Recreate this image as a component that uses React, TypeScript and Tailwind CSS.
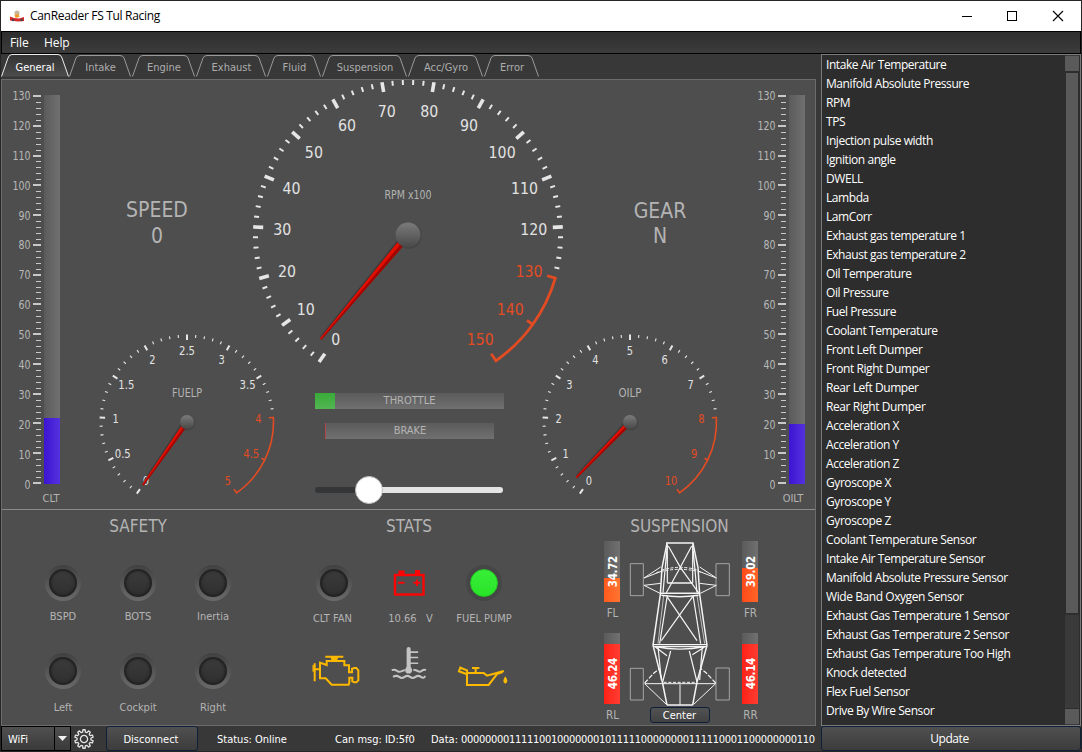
import type { ReactNode } from "react";

const tabs = [
  { name: "General", width: 68 },
  { name: "Intake", width: 62 },
  { name: "Engine", width: 63 },
  { name: "Exhaust", width: 70 },
  { name: "Fluid", width: 54 },
  { name: "Suspension", width: 85 },
  { name: "Acc/Gyro", width: 75 },
  { name: "Error", width: 55 },
];

const signals = [
  "Intake Air Temperature",
  "Manifold Absolute Pressure",
  "RPM",
  "TPS",
  "Injection pulse width",
  "Ignition angle",
  "DWELL",
  "Lambda",
  "LamCorr",
  "Exhaust gas temperature 1",
  "Exhaust gas temperature 2",
  "Oil Temperature",
  "Oil Pressure",
  "Fuel Pressure",
  "Coolant Temperature",
  "Front Left Dumper",
  "Front Right Dumper",
  "Rear Left Dumper",
  "Rear Right Dumper",
  "Acceleration X",
  "Acceleration Y",
  "Acceleration Z",
  "Gyroscope X",
  "Gyroscope Y",
  "Gyroscope Z",
  "Coolant Temperature Sensor",
  "Intake Air Temperature Sensor",
  "Manifold Absolute Pressure Sensor",
  "Wide Band Oxygen Sensor",
  "Exhaust Gas Temperature 1 Sensor",
  "Exhaust Gas Temperature 2 Sensor",
  "Exhaust Gas Temperature Too High",
  "Knock detected",
  "Flex Fuel Sensor",
  "Drive By Wire Sensor",
];

const canData = "00000000111110010000000101111100000000111110001100000000110";

const DIGIT = 0.546;
const DOT = 0.303;
const labelWidth = (text: string, size: number) =>
  [...text].reduce((sum, ch) => sum + (ch === "." ? DOT : DIGIT), 0) * size;

/* Point on a dial; 0 degrees is straight down and angles grow clockwise. */
const polar = (r: number, deg: number): [number, number] => {
  const a = (deg * Math.PI) / 180;
  return [-Math.sin(a) * r, Math.cos(a) * r];
};

type GaugeProps = {
  size: number;
  max: number;
  step: number;
  redFrom: number;
  title: string;
  titleY: number;
  titleWidth: number;
  radius: number;
  majorLength: number;
  minorLength: number;
  majorWidth: number;
  minorWidth: number;
  labelRadius: number;
  fontSize: number;
  hub: number;
  needleLength: number;
  needleAngle: number;
  needleWidth: number;
  arcRadius: number;
  arcWidth: number;
};

function Gauge(g: GaugeProps) {
  const angle = (v: number) => 35 + (v / g.max) * 290;
  const count = Math.round(g.max / g.step) * 5;
  const redDeg = angle(g.redFrom);
  const [ax, ay] = polar(g.arcRadius, redDeg);
  const [bx, by] = polar(g.arcRadius, 325);
  const half = g.size / 2;
  return (
    <svg
      width={g.size}
      height={g.size}
      viewBox={`${-half} ${-half} ${g.size} ${g.size}`}
      className="block shrink-0 overflow-visible"
    >
      {Array.from({ length: count + 1 }, (_, i) => {
        const value = (i * g.step) / 5;
        const major = i % 5 === 0;
        const red = value >= g.redFrom;
        if (red && !major) return null;
        const edge = red && value > g.redFrom && value < g.max;
        const outer = red ? g.arcRadius : g.radius;
        const inner = g.radius - g.majorLength * (edge ? 0.85 : 1);
        const [x1, y1] = polar(major ? inner : g.radius - g.minorLength, angle(value));
        const [x2, y2] = polar(outer, angle(value));
        return (
          <line
            key={i}
            x1={x1}
            y1={y1}
            x2={x2}
            y2={y2}
            stroke={red ? "#e34c22" : "#e6e6e6"}
            strokeWidth={red ? g.arcWidth : major ? g.majorWidth : g.minorWidth}
          />
        );
      })}
      <path
        d={`M${ax} ${ay}A${g.arcRadius} ${g.arcRadius} 0 0 1 ${bx} ${by}`}
        fill="none"
        stroke="#e34c22"
        strokeWidth={g.arcWidth}
        strokeLinecap="square"
      />
      {Array.from({ length: count / 5 + 1 }, (_, i) => {
        const value = i * g.step;
        const text = String(value);
        const [x, y] = polar(g.labelRadius, angle(value));
        return (
          <text
            key={i}
            x={x}
            y={y + g.fontSize * 0.37 + 0.5}
            textAnchor="middle"
            fontSize={g.fontSize}
            textLength={labelWidth(text, g.fontSize)}
            lengthAdjust="spacingAndGlyphs"
            fill={value >= g.redFrom ? "#e34c22" : "#e2e2e2"}
          >
            {text}
          </text>
        );
      })}
      <text
        x={0}
        y={g.titleY + 4.3}
        textAnchor="middle"
        fontSize={11.5}
        textLength={g.titleWidth}
        lengthAdjust="spacingAndGlyphs"
        fill="#b4b4b4"
      >
        {g.title}
      </text>
      <g transform={`rotate(${g.needleAngle})`}>
        <polygon
          points={`${-g.needleWidth - 1.5},0 ${g.needleWidth},0 0.8,${g.needleLength} -2,${g.needleLength - 2}`}
          fill="#2c2c2c"
          opacity="0.55"
        />
        <polygon
          points={`${-g.needleWidth},0 ${g.needleWidth},0 0.9,${g.needleLength} -0.9,${g.needleLength}`}
          fill="#e40e00"
        />
        <polygon
          points={`${g.needleWidth},0 ${g.needleWidth * 0.1},0 0,${g.needleLength} 0.9,${g.needleLength}`}
          fill="#a00500"
        />
      </g>
      <defs>
        <linearGradient id={`hub-${g.title.slice(0, 3)}`} x1="0" y1="0" x2="0" y2="1">
          <stop offset="0" stopColor="#7b7b7b" />
          <stop offset="1" stopColor="#484848" />
        </linearGradient>
      </defs>
      <circle cx="0.6" cy="0.8" r={g.hub + 0.6} fill="#3c3c3c" opacity="0.5" />
      <circle r={g.hub} fill={`url(#hub-${g.title.slice(0, 3)})`} />
    </svg>
  );
}

const smallGauge = {
  size: 176,
  titleY: -29.5,
  radius: 87.5,
  majorLength: 5.5,
  minorLength: 3,
  majorWidth: 2,
  minorWidth: 1.1,
  labelRadius: 71.5,
  fontSize: 11.5,
  hub: 7,
  needleLength: 77,
  needleWidth: 2.4,
  arcRadius: 86.5,
  arcWidth: 1.6,
};

function Thermometer({ name, level, caption }: { name: string; level: number; caption: string }) {
  return (
    <div className="flex w-[62px] shrink-0 flex-col pt-[15px]">
      <svg width="62" height="390" viewBox="0 0 62 390" className="block shrink-0 overflow-visible">
        <defs>
          <linearGradient id="tube" x1="0" x2="1" y1="0" y2="0">
            <stop offset="0" stopColor="#5b5b5b" />
            <stop offset="1" stopColor="#707070" />
          </linearGradient>
          <linearGradient id="fluid" x1="0" x2="1" y1="0" y2="0">
            <stop offset="0" stopColor="#3c14d2" />
            <stop offset="1" stopColor="#5432de" />
          </linearGradient>
        </defs>
        <rect x="42" y="0" width="16" height="389" fill="url(#tube)" />
        <rect x="42" y={389 - level} width="16" height={level} fill="url(#fluid)" />
        {Array.from({ length: 66 }, (_, i) => {
          const major = i % 5 === 0;
          const y = Math.round(388 - i * 5.954);
          return (
            <rect
              key={i}
              x={major ? 31 : 34}
              y={major ? y - 1 : y}
              width={major ? 8 : 5}
              height={major ? 2 : 1}
              fill="#c8c8c8"
            />
          );
        })}
        {Array.from({ length: 14 }, (_, i) => (
          <text
            key={i}
            x="28.5"
            y={393.5 - i * 29.88}
            textAnchor="end"
            fontSize="11.5"
            textLength={labelWidth(String(i * 10), 11)}
            lengthAdjust="spacingAndGlyphs"
            fill="#b8b8b8"
          >
            {i * 10}
          </text>
        ))}
      </svg>
      <div
        className={`flex h-[26px] w-[40px] shrink-0 items-center justify-center text-[11px] leading-none text-[#b4b4b4] ${caption}`}
      >
        {name}
      </div>
    </div>
  );
}

function Led({ on }: { on?: boolean }) {
  return (
    <div
      className={
        on
          ? "flex size-9 items-center justify-center rounded-full bg-[#464646]"
          : "flex size-9 items-center justify-center rounded-full bg-linear-to-b from-[#414141] to-[#6a6a6a]"
      }
    >
      <div
        className={
          on
            ? "size-7 rounded-full border border-[#22c822] bg-linear-to-b from-[#38ee38] to-[#28e428]"
            : "size-7 rounded-full border-2 border-[#232323] bg-linear-to-b from-[#3b3b3b] to-[#303030] shadow-[inset_0_0_3px_#242424]"
        }
      />
    </div>
  );
}

function Lamp({ label, height, children }: { label: ReactNode; height: string; children: ReactNode }) {
  return (
    <div className={`flex w-[75px] flex-col items-center ${height}`}>
      {children}
      <div className="flex grow items-center text-[11px] leading-none whitespace-pre text-[#b4b4b4]">{label}</div>
    </div>
  );
}

function Battery() {
  return (
    <svg width="36" height="36" viewBox="0 0 36 36">
      <path d="M7.500 5.500h6v4.500h-6zM24 5h5v5h-5z" fill="#fb0404" />
      <rect x="4" y="10" width="28.500" height="19.500" fill="none" stroke="#fb0404" strokeWidth="2.400" />
      <path d="M7 17.700h6.500M22.500 17.700h6.500M26 14.500v6.500" stroke="#fb0404" strokeWidth="1.900" />
    </svg>
  );
}

function EngineIcon() {
  return (
    <svg width="50" height="36" viewBox="152 448 150 108">
      <g fill="none" stroke="#fdb900" strokeWidth="6">
        <path d="M195 456h54M199 481v-12h53v13h14v21h9v-11l7-2h6l6 7v30l-6 6h-6l-6-3v-11h-9v14l-2 7h-51l-18-19h-17v-47z" />
        <path d="M163 476v54M163 494h13" strokeWidth="6" />
        <path d="M158.500 481v20" strokeWidth="4" />
      </g>
      <path d="M210 456h24l-4 13h-16z" fill="#fdb900" />
    </svg>
  );
}

function CoolantIcon() {
  return (
    <svg width="36" height="36" viewBox="394 420 106 106">
      <g fill="none" stroke="#c4c4c4" strokeWidth="6">
        <path d="M446 432v60" strokeWidth="12" strokeLinecap="round" />
        <path d="M450 441h24M450 457h24M450 474h24" strokeWidth="4.500" />
        <path d="M396 494q9-3 15 2t15 1t10-3M460 494q7-1 13 3t12-1t12-2" />
        <path d="M400 514q10-6 18 0t16 0t16 0t16 0t16 0t13-3" />
      </g>
      <circle cx="446" cy="494" r="10" fill="#c4c4c4" />
    </svg>
  );
}

function OilIcon() {
  return (
    <svg width="52" height="24" viewBox="590 480 156 72">
      <g fill="none" stroke="#fdb900" strokeWidth="6.200">
        <path d="M620 504h50l10 8 50-14-7 5-12 3-26 34h-65z" />
        <path d="M620 508l-24-9 4-11 20 8v10M635 489h22M646 489v14" />
      </g>
      <path d="M735 514q12 17 0 22q-12-5 0-22z" fill="#fdb900" />
    </svg>
  );
}

function Chassis() {
  return (
    <svg width="102" height="166" viewBox="118 95 306 498" className="block">
      <g fill="none" stroke="#a4a4a4" strokeWidth="3">
        <path d="M122 163h39v96h-39zM379 163h40v96h-40zM122 477h39v95h-39zM379 476h40v96h-40z" />
      </g>
      <g fill="none" stroke="#f4f4f4" strokeWidth="3.600">
        <path d="M229 101h83M232 102l-15 73-5 80-22 153 28 110 14 69M310 102l15 73 5 80 22 153-30 110-13 69M232 587h77" strokeWidth="4.500" />
        <path d="M233 105l-13 145M309 105l13 145M233 105v115M309 105v115" />
        <path d="M236 110l36 64 56 78M306 110l-34 64-42 76" />
        <path d="M233 221h77M212 252h118M215 258q56 8 112 0" strokeWidth="4.500" />
        <path d="M232 262l90 132M309 262l-94 132M233 258l-23 145M310 258l23 145" />
        <path d="M222 258l-17 145M322 258l23 145" strokeWidth="2" />
        <path d="M190 406h162M190 412h162M196 412q75 15 150 0M196 412l36 27M346 412l-38 24" />
        <path d="M243 425l-24 93M299 425l23 93M205 412l10 100M338 412l-8 100" />
        <path d="M165 523h213M165 523l65 62M378 523l-66 62M271 525v62" strokeWidth="3" />
        <path d="M165 521l28-30 18-14M378 521l-28-30-18-14" strokeDasharray="14 5" />
        <path d="M163 206l50-33M163 206l52-20M163 228l50-6M163 228l48 24M380 206l-50-33M380 206l-52-20M380 228l-50-6M380 228l-48 24" strokeWidth="3" />
        <path d="M200 190q70-20 140 0M215 183q56-18 112 0M222 519h95" strokeDasharray="9 5" strokeWidth="3" />
      </g>
    </svg>
  );
}

type DamperProps = { name: string; value: string; height: string; fill: string };

function Damper({ name, value, height, fill }: DamperProps) {
  return (
    <div className="flex w-4 flex-col items-center">
      <div className={`flex w-4 flex-col justify-end bg-linear-to-r from-[#5b5b5b] to-[#707070] ${height}`}>
        <div className={`relative w-4 ${fill}`}>
          <span className="absolute bottom-[15px] left-[1px] w-4 rotate-180 text-[11.500px] leading-4 font-bold tracking-[-0.300px] text-white [writing-mode:vertical-rl]">
            {value}
          </span>
        </div>
      </div>
      <span className="mt-[6px] ml-[2px] text-[11.500px] leading-[11px] text-[#b4b4b4]">{name}</span>
    </div>
  );
}

function GearIcon() {
  const d = Array.from({ length: 40 }, (_, i) => {
    const phase = i % 4;
    const r = phase === 0 || phase === 3 ? 7 : 9.3;
    const offset = [-2.6, -1.7, 1.7, 2.6][phase] * 4.2;
    const a = ((Math.floor(i / 4) * 36 + offset) * Math.PI) / 180;
    return `${i ? "L" : "M"}${(Math.sin(a) * r).toFixed(2)} ${(-Math.cos(a) * r).toFixed(2)}`;
  }).join("");
  return (
    <svg width="20" height="20" viewBox="-10 -10 20 20" fill="none" stroke="#e4e4e4" strokeWidth="1.300" strokeLinejoin="round">
      <path d={`${d}Z`} />
      <circle r="3.600" />
    </svg>
  );
}

export default function App() {
  return (
    <div className="flex h-[752px] w-[1082px] flex-col overflow-hidden border border-[#262626] bg-[#383838] font-['DejaVu_Sans_Condensed','DejaVu_Sans',sans-serif] [font-stretch:condensed]">
      <header className="flex h-[30px] shrink-0 items-center bg-white pl-[8px]">
        <svg width="16" height="14" viewBox="0 0 16 14">
          <path d="M1 7.500l4 1.500 5 .5 5-1.500v4l-6 .5-8-1z" fill="#d8282c" />
          <circle cx="8" cy="4" r="2.600" fill="#c9b79c" />
          <path d="M5.500 6l4-1 1 3-4 1z" fill="#f09a2c" />
          <circle cx="4" cy="11" r="1.300" fill="#4a4a4a" />
          <circle cx="12.500" cy="11" r="1.300" fill="#4a4a4a" />
        </svg>
        <h1 className="ml-[5px] font-['Open_Sans','Noto_Sans',sans-serif] text-[12px] tracking-[-0.320px] text-black [font-stretch:normal]">
          CanReader FS Tul Racing
        </h1>
        <svg width="104" height="12" viewBox="0 0 104 12" fill="none" stroke="#000" className="mr-[15px] ml-auto">
          <path d="M0 6.500h10" />
          <rect x="45.500" y="1.500" width="9" height="9" />
          <path d="M91 1l10 10M101 1l-10 10" strokeWidth="1.100" />
        </svg>
      </header>

      <nav className="flex h-[23px] shrink-0 items-center border border-black bg-linear-to-b from-[#2e2e2e] to-[#3c3c3c] pl-[8px] font-['Open_Sans','Noto_Sans',sans-serif] text-[12px] tracking-[-0.100px] text-white [font-stretch:normal]">
        <span className="w-[34px]">File</span>
        <span>Help</span>
      </nav>

      <div className="flex min-h-0 grow">
        <main className="flex w-[820px] flex-col">
          <div className="flex h-[25px] shrink-0">
            {tabs.map((tab, i) => (
              <div key={tab.name} className="relative ml-[1px] h-[24px]" style={{ width: tab.width - (i ? 0 : 1) }}>
                <svg
                  width={tab.width}
                  height="24"
                  viewBox={`0 0 ${tab.width} 24`}
                  className="absolute top-0 left-[-1px] overflow-visible"
                  stroke={i ? "#9a9a9a" : "#ececec"}
                >
                  <defs>
                    <linearGradient id={`tab-${i}`} x1="0" x2="0" y1="0" y2="1">
                      <stop offset="0" stopColor={i ? "#383838" : "#333333"} />
                      <stop offset="1" stopColor={i ? "#383838" : "#4c4c4c"} />
                    </linearGradient>
                  </defs>
                  <path
                    d={`M0.500 22.500L7 4Q8 ${i ? 1.5 : 0.5} 11 ${i ? 1.5 : 0.5}H${tab.width - 11}Q${tab.width - 8} ${i ? 1.5 : 0.5} ${tab.width - 7} 4L${tab.width - 0.5} 22.500`}
                    fill={`url(#tab-${i})`}
                  />
                </svg>
                <span
                  className={`relative flex h-[28px] items-center justify-center pr-[1px] text-[11px] ${i ? "text-[#adadad]" : "text-white"}`}
                >
                  {tab.name}
                </span>
              </div>
            ))}
          </div>

          <section className="flex h-[647px] w-[815px] shrink-0 flex-col border border-[#6c6c6c] bg-[#4e4e4e] text-[#b4b4b4]">
            <div className="flex h-[430px] shrink-0 border-b border-[#8a8a8a]">
              <Thermometer name="CLT" level={66} caption="ml-[29px]" />

              <div className="flex w-[211px] flex-col pl-[35px]">
                <div className="flex h-[254px] shrink-0 flex-col items-center pt-[117px] pr-[60px] text-[21px] leading-[26px]">
                  <span>SPEED</span>
                  <span>0</span>
                </div>
                <div className="ml-[-0.300px] flex shrink-0">
                  <Gauge {...smallGauge} max={5} step={0.5} redFrom={4} title="FUELP" titleWidth={30} needleAngle={35} />
                </div>
              </div>

              <div className="flex w-[267px] flex-col items-center">
                <div className="flex h-[313px] w-full shrink-0 justify-center pr-[2px]">
                  <Gauge
                    size={310}
                    max={150}
                    step={10}
                    redFrom={130}
                    title="RPM x100"
                    titleY={-40}
                    titleWidth={47}
                    radius={155}
                    majorLength={10}
                    minorLength={5}
                    majorWidth={3.6}
                    minorWidth={2}
                    labelRadius={126}
                    fontSize={16.5}
                    hub={12.5}
                    needleLength={136}
                    needleAngle={40}
                    needleWidth={3.6}
                    arcRadius={153.5}
                    arcWidth={2.8}
                  />
                </div>
                <div className="relative ml-[2px] flex h-4 w-[189px] shrink-0 items-center justify-center bg-linear-to-b from-[#5b5b5b] to-[#707070] pt-px text-[11px]">
                  <div className="absolute top-0 left-0 h-4 w-5 bg-linear-to-b from-[#38aa38] to-[#52b652]" />
                  THROTTLE
                </div>
                <div className="mt-[14px] ml-[2px] flex h-4 w-[169px] shrink-0 items-center justify-center border-l border-[#b04848] bg-linear-to-b from-[#5b5b5b] to-[#707070] pt-px text-[11px]">
                  BRAKE
                </div>
                <div className="mt-[37px] ml-[1px] flex h-[28px] w-[188px] shrink-0 items-center">
                  <div className="h-[6px] w-[45px] rounded-l-full bg-[#353637]" />
                  <div className="z-10 mx-[-5px] size-[28px] shrink-0 rounded-full border border-[#bdbdbd] bg-white" />
                  <div className="h-[6px] grow rounded-r-full bg-[#e4e4e4]" />
                </div>
              </div>

              <div className="flex w-[205px] flex-col">
                <div className="flex h-[254px] shrink-0 flex-col items-center pt-[119px] pl-[31px] text-[21px] leading-[25px]">
                  <span>GEAR</span>
                  <span>N</span>
                </div>
                <div className="ml-[-0.500px] flex shrink-0">
                  <Gauge {...smallGauge} max={10} step={1} redFrom={8} title="OILP" titleWidth={23} needleAngle={44.1} />
                </div>
              </div>

              <Thermometer name="OILT" level={60} caption="ml-[26px]" />
            </div>

            <div className="flex grow">
              <div className="flex w-[272px] flex-col items-center pt-[4px]">
                <h2 className="text-[17px] leading-[25px]">SAFETY</h2>
                <div className="mt-[26px] flex">
                  <Lamp label="BSPD" height="h-[67px]"><Led /></Lamp>
                  <Lamp label="BOTS" height="h-[67px]"><Led /></Lamp>
                  <Lamp label="Inertia" height="h-[67px]"><Led /></Lamp>
                </div>
                <div className="mt-[21px] flex">
                  <Lamp label="Left" height="h-[72px]"><Led /></Lamp>
                  <Lamp label="Cockpit" height="h-[72px]"><Led /></Lamp>
                  <Lamp label="Right" height="h-[72px]"><Led /></Lamp>
                </div>
              </div>

              <div className="flex w-[270px] flex-col items-center pt-[4px]">
                <h2 className="text-[17px] leading-[25px]">STATS</h2>
                <div className="mt-[26px] flex">
                  <Lamp label={"CLT FAN "} height="h-[70px]"><Led /></Lamp>
                  <Lamp label={" 10.66   V"} height="h-[70px]"><Battery /></Lamp>
                  <Lamp label="FUEL PUMP" height="h-[70px]"><Led on /></Lamp>
                </div>
                <div className="mt-[10px] flex">
                  <div className="flex w-[75px] justify-center pt-[9px] pl-[4px]"><EngineIcon /></div>
                  <div className="flex w-[75px] justify-center"><CoolantIcon /></div>
                  <div className="flex w-[75px] justify-center pt-[20px] pr-[3px]"><OilIcon /></div>
                </div>
              </div>

              <div className="flex w-[271px] flex-col items-center pt-[4px]">
                <h2 className="text-[17px] leading-[25px]">SUSPENSION</h2>
                <div className="mt-[2px] ml-[2px] flex">
                  <div className="flex flex-col gap-[14px]">
                    <Damper name="FL" value="34.72" height="h-[61px]" fill="h-[24px] bg-linear-to-r from-[#ff5a1c] to-[#ff7430]" />
                    <Damper name="RL" value="46.24" height="h-[71px]" fill="h-[60px] bg-linear-to-r from-[#ff2016] to-[#ff3c30]" />
                  </div>
                  <div className="mr-[12px] ml-[10px] flex w-[100px] flex-col items-center">
                    <Chassis />
                    <button className="h-[16px] w-[60px] rounded-[3px] border border-[#0d2038] bg-linear-to-b from-[#525252] to-[#424242] pt-px text-[11px] leading-[13px] text-white">
                      Center
                    </button>
                  </div>
                  <div className="flex flex-col gap-[14px]">
                    <Damper name="FR" value="39.02" height="h-[61px]" fill="h-[34px] bg-linear-to-r from-[#ff4a18] to-[#ff6428]" />
                    <Damper name="RR" value="46.14" height="h-[71px]" fill="h-[60px] bg-linear-to-r from-[#ff2016] to-[#ff3c30]" />
                  </div>
                </div>
              </div>
            </div>
          </section>

          <footer className="flex h-[25px] shrink-0 items-center text-[11px] whitespace-nowrap text-white">
            <div className="flex h-[25px] w-[70px] items-stretch border border-black bg-linear-to-b from-[#505050] to-[#3a3a3a]">
              <span className="flex w-[53px] items-center border-r border-black pt-[3px] pl-[6px]">WiFi</span>
              <span className="flex grow items-center justify-center">
                <svg width="9" height="5" viewBox="0 0 9 5">
                  <path d="M0 0h9L4.500 5z" fill="#f0f0f0" />
                </svg>
              </span>
            </div>
            <span className="ml-[3px]"><GearIcon /></span>
            <button className="ml-[12px] h-[25px] w-[92px] rounded-[3px] border border-[#0d2038] bg-linear-to-b from-[#505050] to-[#3c3c3c] pt-[3px] pr-[2px]">
              Disconnect
            </button>
            <span className="ml-[19px] w-[118px] pt-[3px]">Status: Online</span>
            <span className="w-[96px] pt-[3px]">Can msg: ID:5f0</span>
            <span className="w-[30px] pt-[3px]">Data:</span>
            <span className="pt-[3px] tracking-[-0.300px]">{canData}</span>
          </footer>
        </main>

        <aside className="flex w-[260px] flex-col font-['Open_Sans','Noto_Sans',sans-serif] text-[12px] text-white [font-stretch:normal]">
          <div className="flex h-[672px] shrink-0 border border-[#7a7a7a] bg-[#2d2d2d]">
            <ul className="grow pl-[4px] tracking-[-0.430px]">
              {signals.map((name) => (
                <li key={name} className="h-[19px] leading-[20px] whitespace-nowrap">{name}</li>
              ))}
            </ul>
            <div className="flex w-[14px] shrink-0 flex-col items-center bg-[#3a3a3a]">
              <div className="mt-[1px] h-[15px] w-full bg-[#5a5a5a]" />
              <div className="flex h-[544px] w-full justify-center border-y-2 border-[#2d2d2d] bg-[#2d2d2d]">
                <div className="w-[12px] bg-[#5a5a5a]" />
              </div>
              <div className="mt-auto mb-[1px] h-[16px] w-full border-t border-[#2d2d2d] bg-[#5a5a5a]" />
            </div>
            <div className="w-px" />
          </div>
          <button className="h-[25px] rounded-[3px] border border-[#0d2038] bg-linear-to-b from-[#505050] to-[#3c3c3c] pt-px pr-[3px] tracking-[-0.430px]">
            Update
          </button>
        </aside>
      </div>
    </div>
  );
}
